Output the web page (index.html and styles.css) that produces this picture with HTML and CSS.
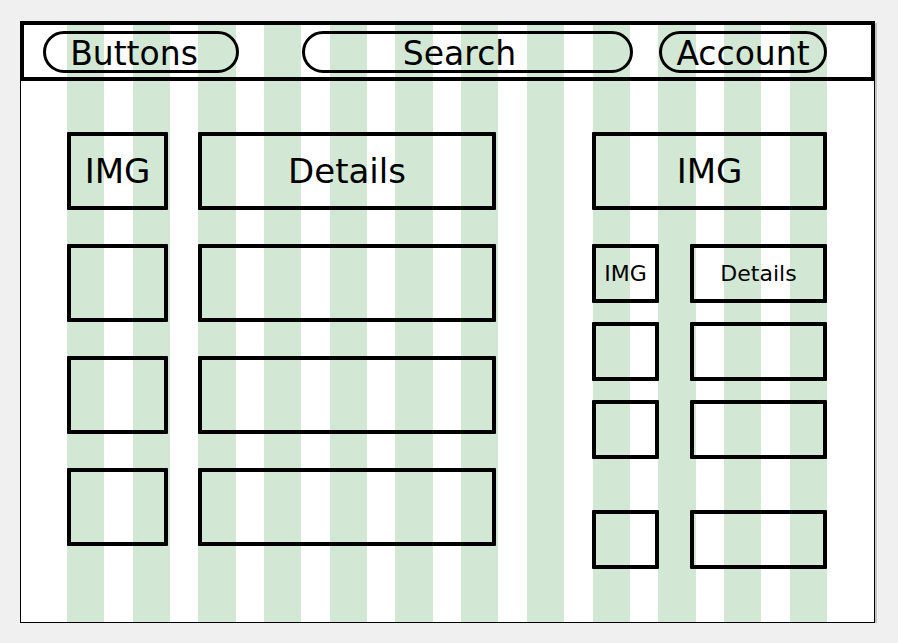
FILE: index.html
```html
<!DOCTYPE html>
<html lang="en">
<head>
    <meta charset="UTF-8">
    <title>Wireframe Layout</title>
    <link rel="stylesheet" href="styles.css">
</head>
<body>
    <div class="canvas">
        <div class="top-bar">
            <div class="pill pill-buttons">Buttons</div>
            <div class="pill pill-search">Search</div>
            <div class="pill pill-account">Account</div>
        </div>
        <div class="page-body">
            <div class="list-grid">
                <div class="box label-lg">IMG</div>
                <div class="box label-lg">Details</div>
                <div class="box"></div>
                <div class="box"></div>
                <div class="box"></div>
                <div class="box"></div>
                <div class="box"></div>
                <div class="box"></div>
            </div>
            <div class="side-panel">
                <div class="box box-hero label-lg">IMG</div>
                <div class="side-grid">
                    <div class="box label-sm">IMG</div>
                    <div class="box label-sm">Details</div>
                    <div class="box"></div>
                    <div class="box"></div>
                    <div class="box"></div>
                    <div class="box"></div>
                    <div class="box last-row"></div>
                    <div class="box last-row"></div>
                </div>
            </div>
        </div>
    </div>
</body>
</html>
```

FILE: styles.css
```css
body {
    margin: 0;
    background: #f0f0f0;
    font-family: "DejaVu Sans", "Liberation Sans", sans-serif;
    color: #000;
}

.canvas {
    box-sizing: border-box;
    width: 855px;
    height: 602px;
    margin: 21px 0 0 20px;
    border: 1px solid #000;
    box-shadow: 2px 2px 0 #c4c4c4;
    background-color: #fff;
    background-image: repeating-linear-gradient(90deg, #d2e8d5 0 37.3px, transparent 37.3px 65.7px);
    background-size: 761px 100%;
    background-position: 46px 0;
    background-repeat: no-repeat;
}

.top-bar {
    box-sizing: border-box;
    display: flex;
    align-items: center;
    height: 60px;
    margin: -1px -1px 0 -1px;
    padding: 2px 0 0 19px;
    border: 4px solid #000;
}

.pill {
    box-sizing: border-box;
    height: 42px;
    border: 3px solid #000;
    border-radius: 21px;
    display: flex;
    align-items: center;
    justify-content: center;
    padding-top: 3px;
    font-size: 33px;
    line-height: 1;
}

.pill-buttons {
    width: 196px;
    margin-right: 63px;
    padding-right: 14px;
}

.pill-search {
    width: 331px;
    margin-right: 26px;
    padding-right: 16px;
}

.pill-account {
    width: 168px;
}

.page-body {
    display: flex;
    padding: 51px 0 0 46px;
}

.list-grid {
    display: grid;
    grid-template-columns: 101px 298px;
    grid-auto-rows: 78px;
    column-gap: 30px;
    row-gap: 34px;
}

.side-panel {
    width: 235px;
    margin-left: 96px;
    display: flex;
    flex-direction: column;
    gap: 34px;
}

.side-grid {
    display: grid;
    grid-template-columns: 67px 137px;
    grid-template-rows: 59px 59px 59px 91px;
    column-gap: 31px;
    row-gap: 19px;
}

.box {
    box-sizing: border-box;
    border: 4px solid #000;
    border-radius: 1px;
    display: flex;
    align-items: center;
    justify-content: center;
}

.box-hero {
    height: 78px;
}

.last-row {
    align-self: end;
    height: 59px;
}

.label-lg {
    font-size: 34px;
}

.label-sm {
    font-size: 22px;
}
```
